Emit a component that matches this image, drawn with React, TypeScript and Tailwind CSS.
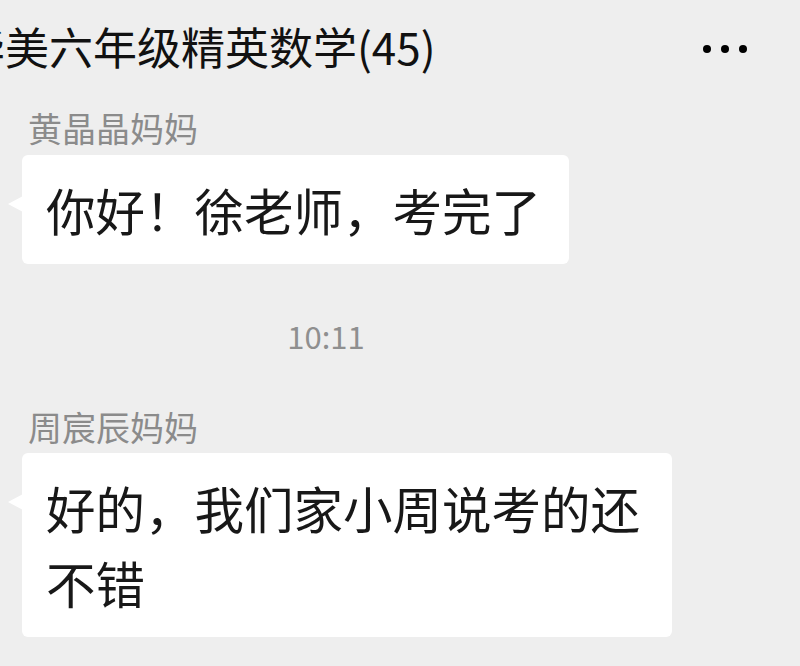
const font = "font-['Noto_Sans_CJK_SC','Noto_Sans',sans-serif]"

function Bubble({ children }: { children: React.ReactNode }) {
  return (
    <div className="relative ml-[22px] w-fit max-w-[650px] rounded-[6px] bg-white py-[17px] pl-[24px] pr-[28px] text-[49.5px] leading-[75px] text-[#181818]">
      <span className="absolute left-[-14px] top-[41px] h-0 w-0 border-y-[8px] border-r-[15px] border-y-transparent border-r-white" />
      {children}
    </div>
  )
}

function Name({ children }: { children: React.ReactNode }) {
  return <div className="pl-[28px] text-[34px] leading-[40px] text-[#8b8b8b]">{children}</div>
}

export default function App() {
  return (
    <div className={`${font} h-[666px] w-[800px] overflow-hidden bg-[#eeeeee]`}>
      <div className="flex items-center justify-between pt-[18px] pr-[53px]">
        <div className="ml-[-39px] whitespace-nowrap text-[44px] leading-[56px] text-[#111]">华美六年级精英数学(45)</div>
        <div className="mt-[6px] flex gap-[10px]">
          <span className="h-[8px] w-[8px] rounded-full bg-black" />
          <span className="h-[8px] w-[8px] rounded-full bg-black" />
          <span className="h-[8px] w-[8px] rounded-full bg-black" />
        </div>
      </div>

      <div className="mt-[34px]">
        <Name>黄晶晶妈妈</Name>
        <div className="mt-[7px]">
          <Bubble>你好！徐老师，考完了</Bubble>
        </div>
      </div>

      <div className="flex w-[652px] justify-center pt-[52px] text-[31px] leading-[40px] text-[#8f8f8f]">10:11</div>

      <div className="mt-[51px]">
        <Name>周宸辰妈妈</Name>
        <div className="mt-[6px]">
          <Bubble>好的，我们家小周说考的还不错</Bubble>
        </div>
      </div>
    </div>
  )
}
